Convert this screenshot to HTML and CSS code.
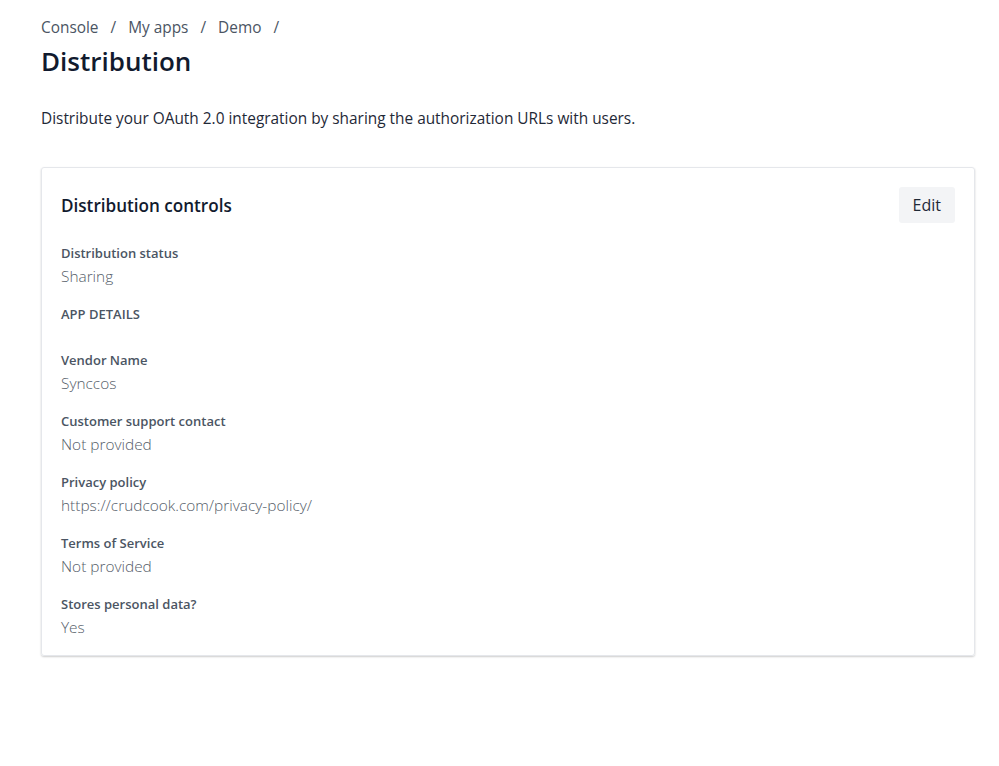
FILE: index.html
```html
<!DOCTYPE html>
<html lang="en">
<head>
<meta charset="utf-8">
<title>Distribution</title>
<link rel="stylesheet" href="styles.css">
</head>
<body>
<main class="page">
  <nav class="breadcrumb">
    <a href="#">Console</a><span class="sep">/</span>
    <a href="#">My apps</a><span class="sep">/</span>
    <a href="#">Demo</a><span class="sep">/</span>
  </nav>
  <h1 class="title">Distribution</h1>
  <p class="intro">Distribute your OAuth 2.0 integration by sharing the authorization URLs with users.</p>

  <section class="card">
    <header class="card-head">
      <h2 class="card-title">Distribution controls</h2>
      <button class="btn">Edit</button>
    </header>
    <div class="field">
      <div class="label">Distribution status</div>
      <div class="value">Sharing</div>
    </div>
    <div class="section-label">APP DETAILS</div>
    <div class="field">
      <div class="label">Vendor Name</div>
      <div class="value">Synccos</div>
    </div>
    <div class="field">
      <div class="label">Customer support contact</div>
      <div class="value">Not provided</div>
    </div>
    <div class="field">
      <div class="label">Privacy policy</div>
      <div class="value">https://crudcook.com/privacy-policy/</div>
    </div>
    <div class="field">
      <div class="label">Terms of Service</div>
      <div class="value">Not provided</div>
    </div>
    <div class="field">
      <div class="label">Stores personal data?</div>
      <div class="value">Yes</div>
    </div>
  </section>
</main>
</body>
</html>
```

FILE: styles.css
```css
* { box-sizing: border-box; }
html, body { margin: 0; padding: 0; background: #fff; }
body {
  font-family: "Open Sans", "Noto Sans", sans-serif;
  color: #1f2937;
}
.page {
  padding: 16px 25px 40px 41px;
}
.breadcrumb {
  display: flex;
  align-items: center;
  font-size: 15.4px;
  line-height: 24px;
  color: #4b5563;
}
.breadcrumb a { color: #4b5563; text-decoration: none; }
.breadcrumb .sep { margin: 0 12px; }
.title {
  margin: 3px 0 0;
  font-size: 26px;
  line-height: 36px;
  font-weight: 600;
  color: #111a2e;
}
.intro {
  margin: 28px 0 0;
  font-size: 15.4px;
  line-height: 24px;
  color: #1f2937;
}
.card {
  margin-top: 36px;
  width: 934px;
  border: 1px solid #e5e7eb;
  border-radius: 3px;
  box-shadow: 0 1px 2px rgba(0,0,0,0.2);
  padding: 19px 19px 13px;
}
.card-head {
  display: flex;
  justify-content: space-between;
  align-items: center;
  margin-bottom: 20px;
}
.card-title {
  margin: 0;
  font-size: 17.1px;
  font-weight: 600;
  color: #111a2e;
}
.btn {
  font-family: inherit;
  font-size: 16px;
  font-weight: 500;
  color: #1f2937;
  background: #f3f4f6;
  border: none;
  border-radius: 3px;
  height: 36px;
  padding: 0 14px;
}
.field { margin-bottom: 13px; }
.field:last-child { margin-bottom: 0; }
.label {
  font-size: 13px;
  line-height: 20px;
  font-weight: 600;
  color: #4b5563;
}
.value {
  font-size: 15.4px;
  line-height: 28px;
  font-weight: 300;
  color: #555d69;
}
.section-label {
  font-size: 13px;
  line-height: 20px;
  font-weight: 600;
  color: #4b5563;
  margin: 13px 0 26px;
}
```
